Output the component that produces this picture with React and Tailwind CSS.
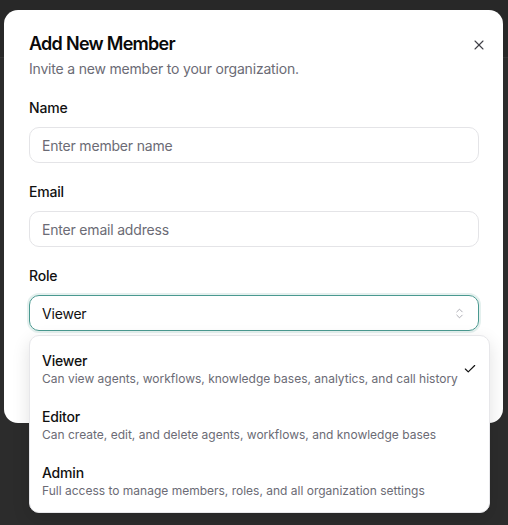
import { Check, ChevronsUpDown, X } from 'lucide-react';

const roles = [
	{ name: 'Viewer', description: 'Can view agents, workflows, knowledge bases, analytics, and call history', selected: true },
	{ name: 'Editor', description: 'Can create, edit, and delete agents, workflows, and knowledge bases' },
	{ name: 'Admin', description: 'Full access to manage members, roles, and all organization settings' },
];

function Field({ label, placeholder }) {
	return (
		<div className="flex flex-col gap-[9px]">
			<label className="text-sm leading-5 font-medium text-[#111]">{label}</label>
			<div className="flex h-9 items-center rounded-[10px] border border-[#e4e4e7] px-3 pt-px text-sm text-[#6b6b75]">
				{placeholder}
			</div>
		</div>
	);
}

export default function App() {
	return (
		<div className="relative h-[525px] w-[508px] overflow-hidden bg-[#2c2c2c] font-['Inter',sans-serif] tracking-[-0.012em]">
			<div className="h-[58px] border-b border-[#353535] bg-[#282828]" />
			<div className="absolute top-[10px] left-[4px] h-[413px] w-[499px] rounded-[14px] bg-white pt-5 pr-[24px] pl-[25px]">
				<button type="button" className="absolute top-[27px] right-[16px] text-[#3f3f46]">
					<X size={16} strokeWidth={1.6} />
				</button>
				<h2 className="text-lg leading-7 font-semibold tracking-[-0.04em] text-[#0a0a0a]">Add New Member</h2>
				<p className="mt-px text-sm leading-5 text-[#6b6b75]">Invite a new member to your organization.</p>

				<div className="mt-[19px] flex flex-col gap-[19px]">
					<Field label="Name" placeholder="Enter member name" />
					<Field label="Email" placeholder="Enter email address" />
					<div className="flex flex-col gap-[9px]">
						<label className="text-sm leading-5 font-medium text-[#111]">Role</label>
						<div className="flex h-9 items-center justify-between rounded-[10px] border border-[#4a9990] px-3 pt-px text-sm text-[#111] ring-2 ring-[#4a9990]/15">
							<span>Viewer</span>
							<ChevronsUpDown size={13} strokeWidth={1.5} className="text-[#9a9aa2]" />
						</div>
					</div>
				</div>
			</div>

			<div className="absolute top-[335px] left-[29px] w-[461px] rounded-[10px] border border-[#e7e7ea] bg-white p-1 shadow-[0_6px_18px_rgba(0,0,0,0.12)]">
				{roles.map((role) => (
					<div key={role.name} className="flex h-14 items-center justify-between rounded-md px-[8px] pt-[1px]">
						<div className="flex flex-col">
							<span className="text-sm leading-5 font-medium text-[#111]">{role.name}</span>
							<span className="text-xs leading-4 tracking-normal whitespace-nowrap text-[#6b6b75]">{role.description}</span>
						</div>
						{role.selected && <Check size={14} strokeWidth={2} className="text-[#111]" />}
					</div>
				))}
			</div>
		</div>
	);
}
